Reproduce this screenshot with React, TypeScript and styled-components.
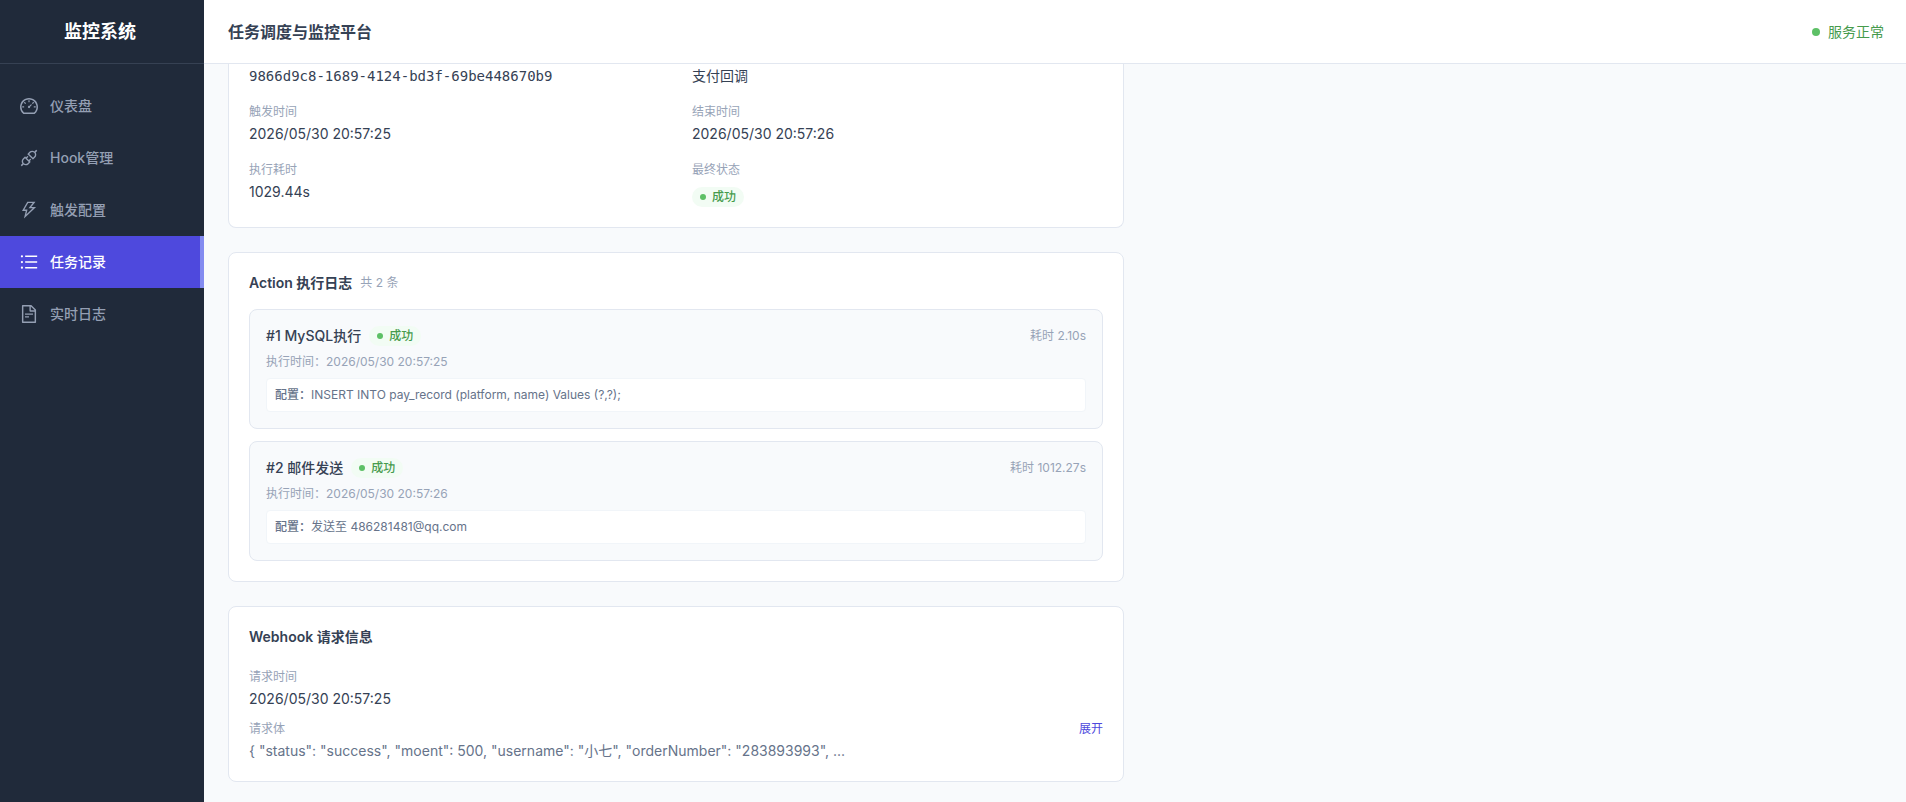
import React from 'react';
import styled, { createGlobalStyle } from 'styled-components';
import {
  AiOutlineApi,
  AiOutlineDashboard,
  AiOutlineFileText,
  AiOutlineThunderbolt,
  AiOutlineUnorderedList,
} from 'react-icons/ai';

const color = {
  navy: '#202a3a',
  navyLine: '#364153',
  navText: '#949fb3',
  accent: '#4e49dd',
  accentLight: '#838bf0',
  page: '#f8fafc',
  line: '#e2e7f0',
  lineSoft: '#f1f5f9',
  heading: '#354154',
  text: '#354154',
  body: '#66738a',
  muted: '#97a3b7',
  green: '#469b4d',
  greenDot: '#5dc066',
  greenSoft: '#f2fcf4',
};

const GlobalStyle = createGlobalStyle`
  *, *::before, *::after { box-sizing: border-box; }
  body {
    margin: 0;
    background: ${color.page};
    color: ${color.text};
    font-family: Inter, "Noto Sans CJK SC", sans-serif;
    font-size: 14px;
    line-height: 20px;
    -webkit-font-smoothing: antialiased;
  }
  h1, h2, h3, p, dl, dd, ul { margin: 0; padding: 0; }
  ul { list-style: none; }
`;

const Shell = styled.div`
  display: flex;
  min-height: 100vh;
`;

const Sidebar = styled.aside`
  flex: 0 0 204px;
  background: ${color.navy};
`;

const Brand = styled.div`
  display: flex;
  align-items: center;
  justify-content: center;
  height: 64px;
  padding-right: 4px;
  border-bottom: 1px solid ${color.navyLine};
  color: #fff;
  font-size: 18px;
  font-weight: 700;
  line-height: 28px;
`;

const Menu = styled.ul`
  && { padding: 16px 0; }
`;

const MenuLink = styled.a<{ $active?: boolean }>`
  display: flex;
  align-items: center;
  gap: 12px;
  height: 52px;
  padding: 0 16px 0 20px;
  border-right: 4px solid ${(p) => (p.$active ? color.accentLight : 'transparent')};
  background: ${(p) => (p.$active ? color.accent : 'transparent')};
  background-clip: padding-box;
  color: ${(p) => (p.$active ? '#fff' : color.navText)};
  font-weight: 500;
  text-decoration: none;

  svg { flex: none; }
`;

const Page = styled.div`
  display: flex;
  flex: 1;
  flex-direction: column;
  min-width: 0;
`;

const TopBar = styled.header`
  display: flex;
  align-items: center;
  justify-content: space-between;
  height: 64px;
  padding: 0 22px 0 24px;
  border-bottom: 1px solid ${color.line};
  background: #fff;
`;

const PageTitle = styled.h1`
  color: ${color.heading};
  font-size: 16px;
  font-weight: 600;
  line-height: 24px;
`;

const Service = styled.div`
  display: flex;
  align-items: center;
  gap: 8px;
  color: ${color.green};
`;

const Dot = styled.span<{ $size: number }>`
  width: ${(p) => p.$size}px;
  height: ${(p) => p.$size}px;
  border-radius: 50%;
  background: ${color.greenDot};
`;

const Content = styled.main`
  display: flex;
  flex-direction: column;
  gap: 24px;
  max-width: 944px;
  padding: 0 24px 20px;
`;

const Card = styled.section<{ $continued?: boolean }>`
  padding: ${(p) => (p.$continued ? '2px 20px 20px' : '20px')};
  border: 1px solid ${color.line};
  border-top-width: ${(p) => (p.$continued ? 0 : 1)}px;
  border-radius: ${(p) => (p.$continued ? '0 0 8px 8px' : '8px')};
  background: #fff;
`;

const CardHead = styled.div`
  display: flex;
  align-items: center;
  gap: 8px;
  margin-bottom: 16px;
`;

const CardTitle = styled.h2`
  color: ${color.heading};
  font-size: 14px;
  font-weight: 600;
  line-height: 20px;
`;

const Small = styled.span`
  color: ${color.muted};
  font-size: 12px;
  line-height: 16px;
`;

const InfoGrid = styled.dl`
  display: grid;
  grid-template-columns: 1fr 1fr;
  gap: 18px 32px;
`;

const Label = styled.dt`
  margin-bottom: 4px;
  color: ${color.muted};
  font-size: 12px;
  line-height: 16px;
`;

const Value = styled.dd<{ $mono?: boolean }>`
  ${(p) => p.$mono && 'font-family: "DejaVu Sans Mono", monospace;'}
`;

const BadgeValue = styled.dd`
  padding-top: 5px;
`;

const Badge = styled.span`
  display: flex;
  align-items: center;
  gap: 6px;
  width: fit-content;
  padding: 2px 8px;
  border-radius: 10px;
  background: ${color.greenSoft};
  color: ${color.green};
  font-size: 12px;
  font-weight: 500;
  line-height: 16px;
`;

const LogList = styled.ul`
  display: flex;
  flex-direction: column;
  gap: 12px;
`;

const LogItem = styled.li`
  display: flex;
  flex-direction: column;
  gap: 8px;
  padding: 16px;
  border: 1px solid ${color.line};
  border-radius: 8px;
  background: ${color.page};
`;

const LogHead = styled.div`
  display: flex;
  align-items: center;
  justify-content: space-between;
`;

const LogName = styled.div`
  display: flex;
  align-items: center;
  gap: 8px;
`;

const LogTitle = styled.h3`
  font-size: 14px;
  font-weight: 500;
  line-height: 20px;
`;

const Config = styled.p`
  && { padding: 8px; }
  border: 1px solid ${color.lineSoft};
  border-radius: 4px;
  background: #fff;
  color: ${color.body};
  font-size: 12px;
  line-height: 16px;
`;

const ConfigLabel = styled.span`
  font-weight: 500;
`;

const RequestInfo = styled.dl`
  display: flex;
  flex-direction: column;
  gap: 12px;
  && { padding-top: 6px; }
`;

const LabelRow = styled.div`
  display: flex;
  justify-content: space-between;
`;

const ExpandButton = styled.button`
  height: 16px;
  padding: 0;
  border: 0;
  background: none;
  color: ${color.accent};
  font: inherit;
  font-size: 12px;
  line-height: 16px;
  cursor: pointer;
`;

const Payload = styled.dd`
  overflow: hidden;
  color: ${color.body};
  text-overflow: ellipsis;
  white-space: nowrap;
`;

const menu = [
  { label: '仪表盘', Icon: AiOutlineDashboard },
  { label: 'Hook管理', Icon: AiOutlineApi },
  { label: '触发配置', Icon: AiOutlineThunderbolt },
  { label: '任务记录', Icon: AiOutlineUnorderedList, active: true },
  { label: '实时日志', Icon: AiOutlineFileText },
];

const logs = [
  {
    name: '#1 MySQL执行',
    cost: '2.10s',
    time: '2026/05/30 20:57:25',
    config: 'INSERT INTO pay_record (platform, name) Values (?,?);',
  },
  {
    name: '#2 邮件发送',
    cost: '1012.27s',
    time: '2026/05/30 20:57:26',
    config: '发送至 486281481@qq.com',
  },
];

const SuccessBadge = () => (
  <Badge>
    <Dot $size={6} />
    成功
  </Badge>
);

export default function App() {
  return (
    <>
      <GlobalStyle />
      <Shell>
        <Sidebar>
          <Brand>监控系统</Brand>
          <nav>
            <Menu>
              {menu.map(({ label, Icon, active }) => (
                <li key={label}>
                  <MenuLink href="#" $active={active} aria-current={active ? 'page' : undefined}>
                    <Icon size={18} viewBox="64 64 896 896" />
                    {label}
                  </MenuLink>
                </li>
              ))}
            </Menu>
          </nav>
        </Sidebar>
        <Page>
          <TopBar>
            <PageTitle>任务调度与监控平台</PageTitle>
            <Service>
              <Dot $size={8} />
              服务正常
            </Service>
          </TopBar>
          <Content>
            <Card $continued>
              <InfoGrid>
                <Value $mono>9866d9c8-1689-4124-bd3f-69be448670b9</Value>
                <Value>支付回调</Value>
                <div>
                  <Label>触发时间</Label>
                  <Value>2026/05/30 20:57:25</Value>
                </div>
                <div>
                  <Label>结束时间</Label>
                  <Value>2026/05/30 20:57:26</Value>
                </div>
                <div>
                  <Label>执行耗时</Label>
                  <Value>1029.44s</Value>
                </div>
                <div>
                  <Label>最终状态</Label>
                  <BadgeValue>
                    <SuccessBadge />
                  </BadgeValue>
                </div>
              </InfoGrid>
            </Card>

            <Card>
              <CardHead>
                <CardTitle>Action 执行日志</CardTitle>
                <Small>共 2 条</Small>
              </CardHead>
              <LogList>
                {logs.map((log) => (
                  <LogItem key={log.name}>
                    <LogHead>
                      <LogName>
                        <LogTitle>{log.name}</LogTitle>
                        <SuccessBadge />
                      </LogName>
                      <Small>耗时 {log.cost}</Small>
                    </LogHead>
                    <Small>执行时间：{log.time}</Small>
                    <Config>
                      <ConfigLabel>配置：</ConfigLabel>
                      {log.config}
                    </Config>
                  </LogItem>
                ))}
              </LogList>
            </Card>

            <Card>
              <CardHead>
                <CardTitle>Webhook 请求信息</CardTitle>
              </CardHead>
              <RequestInfo>
                <div>
                  <Label>请求时间</Label>
                  <Value>2026/05/30 20:57:25</Value>
                </div>
                <div>
                  <LabelRow>
                    <Label>请求体</Label>
                    <ExpandButton type="button">展开</ExpandButton>
                  </LabelRow>
                  <Payload>
                    {'{ "status": "success", "moent": 500, "username": "小七", "orderNumber": "283893993", ...'}
                  </Payload>
                </div>
              </RequestInfo>
            </Card>
          </Content>
        </Page>
      </Shell>
    </>
  );
}
